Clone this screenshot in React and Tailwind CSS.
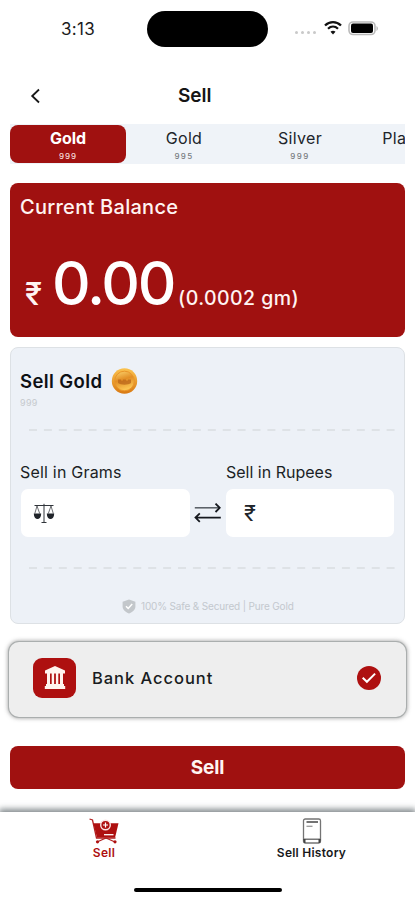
const METALS = [
  { key: 'gold-999', name: 'Gold', purity: '999' },
  { key: 'gold-995', name: 'Gold', purity: '995' },
  { key: 'silver-999', name: 'Silver', purity: '999' },
  { key: 'platinum', name: 'Platinum', purity: '' },
];

function StatusBar() {
  return (
    <div className="flex h-[58px] shrink-0 items-start">
      <span className="mt-[17px] ml-[61px] w-[86px] text-[17px] leading-6 tracking-[0.3px] text-[#1c1c1c]">3:13</span>
      <div className="mt-[11px] h-9 w-[121px] rounded-full bg-black" />
      <div className="mt-[31px] ml-[27px] flex gap-[3px]">
        {[0, 1, 2, 3].map((dot) => (
          <span key={dot} className="size-[3px] rounded-full bg-[#c9c9c9]" />
        ))}
      </div>
      <svg className="mt-[20px] ml-[7px] h-[15px] w-[20px]" viewBox="0 0 20 15" fill="none">
        <path d="M2 5.5C6.7.9 13.3.9 18 5.5" stroke="#111" strokeWidth="2.3" />
        <path d="M5 8.8c3-2.9 7-2.9 10 0" stroke="#111" strokeWidth="2.2" />
        <path d="M7.5 11.8c1.5-1.5 3.5-1.5 5 0L10 14.4z" fill="#111" />
      </svg>
      <svg className="mt-[21px] ml-[5px] h-[15px] w-[32px]" viewBox="0 0 32 15" fill="none">
        <rect x="1" y="1" width="26" height="12.5" rx="4" stroke="#b9b9b9" strokeWidth="1.6" />
        <rect x="3" y="2.6" width="22" height="9.4" rx="2" fill="#000" />
        <path d="M28.5 5v5c1.8-.7 1.8-4.3 0-5z" fill="#b5b5b5" />
      </svg>
    </div>
  );
}

function Header() {
  return (
    <header className="flex h-[66px] shrink-0 items-center pt-[10px]">
      <svg className="ml-[30px] h-4 w-[11px]" viewBox="0 0 11 16" fill="none">
        <path d="M9 1.5 2.2 8 9 14.5" stroke="#181818" strokeWidth="1.8" />
      </svg>
      <h1 className="ml-[137px] text-[19px] leading-6 font-semibold text-[#151515]">Sell</h1>
    </header>
  );
}

function MetalTab({ metal, active }) {
  return (
    <button
      type="button"
      className={`flex h-[38px] w-[116px] shrink-0 flex-col items-center rounded-[8px] pt-[3px] ${
        active ? 'bg-[#a01110] text-white' : 'text-[#20242a]'
      }`}
    >
      <span
        className={`text-[16px] leading-5 ${active ? 'font-bold' : 'font-normal tracking-[0.3px]'}`}
      >
        {metal.name}
      </span>
      <span
        className={`text-[8px] leading-4 font-medium ${
          active ? 'tracking-[1px] text-[#f6dcdc]' : 'tracking-[1.4px] text-[#777b80]'
        }`}
      >
        {metal.purity}
      </span>
    </button>
  );
}

function BalanceCard() {
  return (
    <section className="mt-[19px] h-[154px] shrink-0 rounded-[8px] bg-[#a01110] px-[10px] pt-3 text-[#fff4f2]">
      <h2 className="text-[20px] leading-6 font-medium tracking-[0.27px]">Current Balance</h2>
      <div className="mt-[34px] flex items-baseline leading-[60px]">
        <span className="ml-[5px] w-[27px] text-[31px] font-medium">₹</span>
        <span className="w-[126px] text-[60px] font-medium tracking-[-2.2px] text-white">0.00</span>
        <span className="text-[19.5px] font-medium tracking-[0.45px]">(0.0002 gm)</span>
      </div>
    </section>
  );
}

function CoinIcon() {
  return (
    <svg className="h-[26px] w-[27px]" viewBox="0 0 27 26">
      <defs>
        <linearGradient id="coin" x1="0" y1="0" x2="0" y2="1">
          <stop offset="0" stopColor="#fbc34f" />
          <stop offset="1" stopColor="#d97912" />
        </linearGradient>
        <linearGradient id="coinFace" x1="0" y1="0" x2="0.3" y2="1">
          <stop offset="0" stopColor="#fdd770" />
          <stop offset="0.5" stopColor="#e28e25" />
          <stop offset="1" stopColor="#fbc552" />
        </linearGradient>
      </defs>
      <circle cx="13.5" cy="13" r="12.7" fill="url(#coin)" />
      <circle cx="13.5" cy="13" r="9.8" fill="url(#coinFace)" stroke="#e9952a" strokeWidth="1" />
      <path d="M7 11.5h3v1h2v-1h3v1h2v-1h3v3.5c-3 2.2-10 2.2-13 0z" fill="#b9651a" opacity="0.75" />
    </svg>
  );
}

function ScaleIcon() {
  return (
    <svg className="h-[21px] w-[22px]" viewBox="0 0 22 21" fill="none" stroke="#30343a">
      <path d="M1.5 2.5h19M11 .8v18.5M8.5 19.5h5" strokeWidth="1" />
      <path d="M4 3 1.8 10.5M4 3l2.7 7.5M18 3l-2.7 7.5M18 3l2.3 7.5" strokeWidth="0.7" />
      <path d="M.8 10.5h7.4c0 7.4-7.4 7.4-7.4 0zM13.8 10.5h7.4c0 7.4-7.4 7.4-7.4 0z" fill="#20242a" stroke="none" />
    </svg>
  );
}

function DashedLine() {
  return (
    <svg className="ml-[18px] h-[2px] w-[367px]" viewBox="0 0 367 2">
      <path d="M0 1h367" stroke="#d9dde1" strokeWidth="1.3" strokeDasharray="8 6.9" />
    </svg>
  );
}

function SellForm() {
  return (
    <section className="mt-[10px] flex h-[277px] shrink-0 flex-col rounded-[8px] border border-[#dde1e5] bg-[#edf1f7]">
      <div className="mt-[20px] ml-[9px] flex h-[26px] items-center">
        <h2 className="w-[91px] text-[18.5px] leading-6 font-semibold tracking-[0.4px] whitespace-nowrap text-[#0d1015]">
          Sell Gold
        </h2>
        <CoinIcon />
      </div>
      <span className="mt-[3px] ml-[9px] text-[9px] leading-3 tracking-[0.3px] text-[#c6cace]">999</span>
      <div className="mt-[20px] flex">
        <DashedLine />
      </div>

      <div className="mt-[29px] flex pl-[9px] text-[16px] leading-6 tracking-[0.2px] text-[#1b1f25]">
        <label className="w-[206px]">Sell in Grams</label>
        <label className="tracking-[0px]">Sell in Rupees</label>
      </div>
      <div className="mt-[5px] flex h-12 items-center pl-[10px]">
        <div className="flex h-12 w-[169px] items-center rounded-[7px] bg-white pl-3">
          <ScaleIcon />
        </div>
        <svg className="mx-[4px] h-[20px] w-[28px]" viewBox="0 0 28 20" fill="none">
          <path d="M.8 4.8h25" stroke="#555a61" strokeWidth="1.5" />
          <path d="m21.5.6 4.2 4.2L21.5 9M26.8 14.6H1.5M5.8 10.4l-4.3 4.2 4.3 4.2" stroke="#15181e" strokeWidth="1.8" />
        </svg>
        <div className="flex h-12 w-[168px] items-center rounded-[7px] bg-white pl-[18px]">
          <span className="text-[22px] leading-6 text-[#20242a]">₹</span>
        </div>
      </div>
      <div className="mt-[30px] flex">
        <DashedLine />
      </div>

      <div className="mt-[29px] flex items-center pl-[111px]">
        <svg className="h-[15px] w-[14px]" viewBox="0 0 14 15">
          <path d="M7 .5 13.4 2.8v4.7c0 3.2-2.9 5.7-6.4 7C3.5 13.2.6 10.7.6 7.5V2.8z" fill="#c3c7cb" />
          <path d="m4 7.2 2.2 2.3L10.2 5" fill="none" stroke="#fff" strokeWidth="1.5" />
        </svg>
        <span className="ml-[5px] text-[10px] leading-4 tracking-[-0.16px] whitespace-nowrap text-[#c3c8ce]">
          100% Safe &amp; Secured | Pure Gold
        </span>
      </div>
    </section>
  );
}

function BankIcon() {
  return (
    <svg className="h-[23px] w-[22px]" viewBox="0 0 22 23" fill="#fff3ee">
      <path d="M11 0 21 4.5v3H1v-3zM3 7h3v11H3zM7.7 7h2.4v11H7.7zM11.9 7h2.4v11h-2.4zM16 7h3v11h-3zM2 18h18v2.5H2zM.8 20h20.4v3H.8z" />
    </svg>
  );
}

function BankAccountRow() {
  return (
    <button
      type="button"
      className="-mx-px mt-[18px] flex h-[75px] shrink-0 items-center rounded-[10px] bg-[#eeeeee] pb-1 pl-[24px] shadow-[0_0_4px_1px_rgba(70,70,70,0.55)] ring-1 ring-[#aaaeae]"
    >
      <span className="flex h-10 w-[43px] items-center justify-center rounded-[9px] bg-[#ae1010]">
        <BankIcon />
      </span>
      <span className="ml-4 text-[16.5px] leading-6 font-medium tracking-[0.95px] text-[#181c21]">Bank Account</span>
      <span className="mr-[25px] ml-auto flex size-6 items-center justify-center rounded-full bg-[#ae1010]">
        <svg className="h-[12px] w-[16px]" viewBox="0 0 16 12" fill="none">
          <path d="m1.7 5.8 4.2 4 8.2-8.2" stroke="#fff" strokeWidth="2" />
        </svg>
      </span>
    </button>
  );
}

function CartIcon() {
  return (
    <svg className="h-[26px] w-[30px]" viewBox="0 0 30 26" fill="none">
      <path d="M.5 1 3.5 2 7.5 20h19" stroke="#b22020" strokeWidth="1.3" />
      <path d="M4.3 5.2h25.2l-3.4 14.3H8z" fill="#ae1010" />
      <circle cx="16.5" cy="7" r="4.8" fill="#ae1010" stroke="#fbe3e3" strokeWidth="1.4" />
      <path d="M16.5 4.6v5M14 7h5" stroke="#fff" strokeWidth="1.2" />
      <path d="M15 16.7h9.5" stroke="#fff" strokeWidth="1.3" />
      <path d="m8 24 9-4M26 24l-9-4" stroke="#b22020" strokeWidth="1.3" />
      <circle cx="8.5" cy="23.8" r="1.6" fill="#ae1010" />
      <circle cx="26" cy="23.8" r="1.6" fill="#ae1010" />
    </svg>
  );
}

function HistoryIcon() {
  return (
    <svg className="h-[26px] w-[20px]" viewBox="0 0 20 26" fill="none">
      <rect x="1.5" y="1" width="17" height="24" rx="1.8" stroke="#747474" strokeWidth="1.3" />
      <path d="M4.5 4h11.5" stroke="#444" strokeWidth="1.5" />
      <path d="M4.5 8.3h6" stroke="#999" strokeWidth="1.3" />
      <path d="M2 21.2h16" stroke="#555" strokeWidth="1.2" />
      <path d="M1.2 21h2.3v4H2zM16.5 21h2.3l-.6 4h-1.7z" fill="#444" />
    </svg>
  );
}

function BottomNav() {
  return (
    <nav className="mt-[23px] flex flex-1 flex-col bg-white shadow-[0_-2px_6px_1px_rgba(65,75,80,0.65)]">
      <div className="flex pt-[6px] text-[12px] leading-4">
        <div className="flex w-[208px] flex-col items-center text-[#ae1010]">
          <CartIcon />
          <span className="mt-[1px] font-semibold tracking-[0.3px]">Sell</span>
        </div>
        <div className="flex flex-1 flex-col items-center text-[#18191b]">
          <HistoryIcon />
          <span className="mt-[1px] font-semibold tracking-[0.25px]">Sell History</span>
        </div>
      </div>
      <div className="mt-auto mb-[8px] ml-[134px] h-1 w-[148px] rounded-full bg-black" />
    </nav>
  );
}

export default function App() {
  return (
    <div className="flex h-[900px] w-[415px] flex-col overflow-hidden bg-white font-['Inter','Noto_Sans',sans-serif]">
      <StatusBar />
      <Header />
      <main className="flex shrink-0 flex-col px-[10px]">
        <div className="flex h-10 shrink-0 items-center overflow-hidden bg-[#eff3f8]">
          {METALS.map((metal, index) => (
            <MetalTab key={metal.key} metal={metal} active={index === 0} />
          ))}
        </div>
        <BalanceCard />
        <SellForm />
        <BankAccountRow />
        <button
          type="button"
          className="mt-[29px] h-[43px] shrink-0 rounded-[8px] bg-[#a01110] text-[19px] leading-6 font-bold tracking-[-0.1px] text-[#fff4f2]"
        >
          Sell
        </button>
      </main>
      <BottomNav />
    </div>
  );
}
